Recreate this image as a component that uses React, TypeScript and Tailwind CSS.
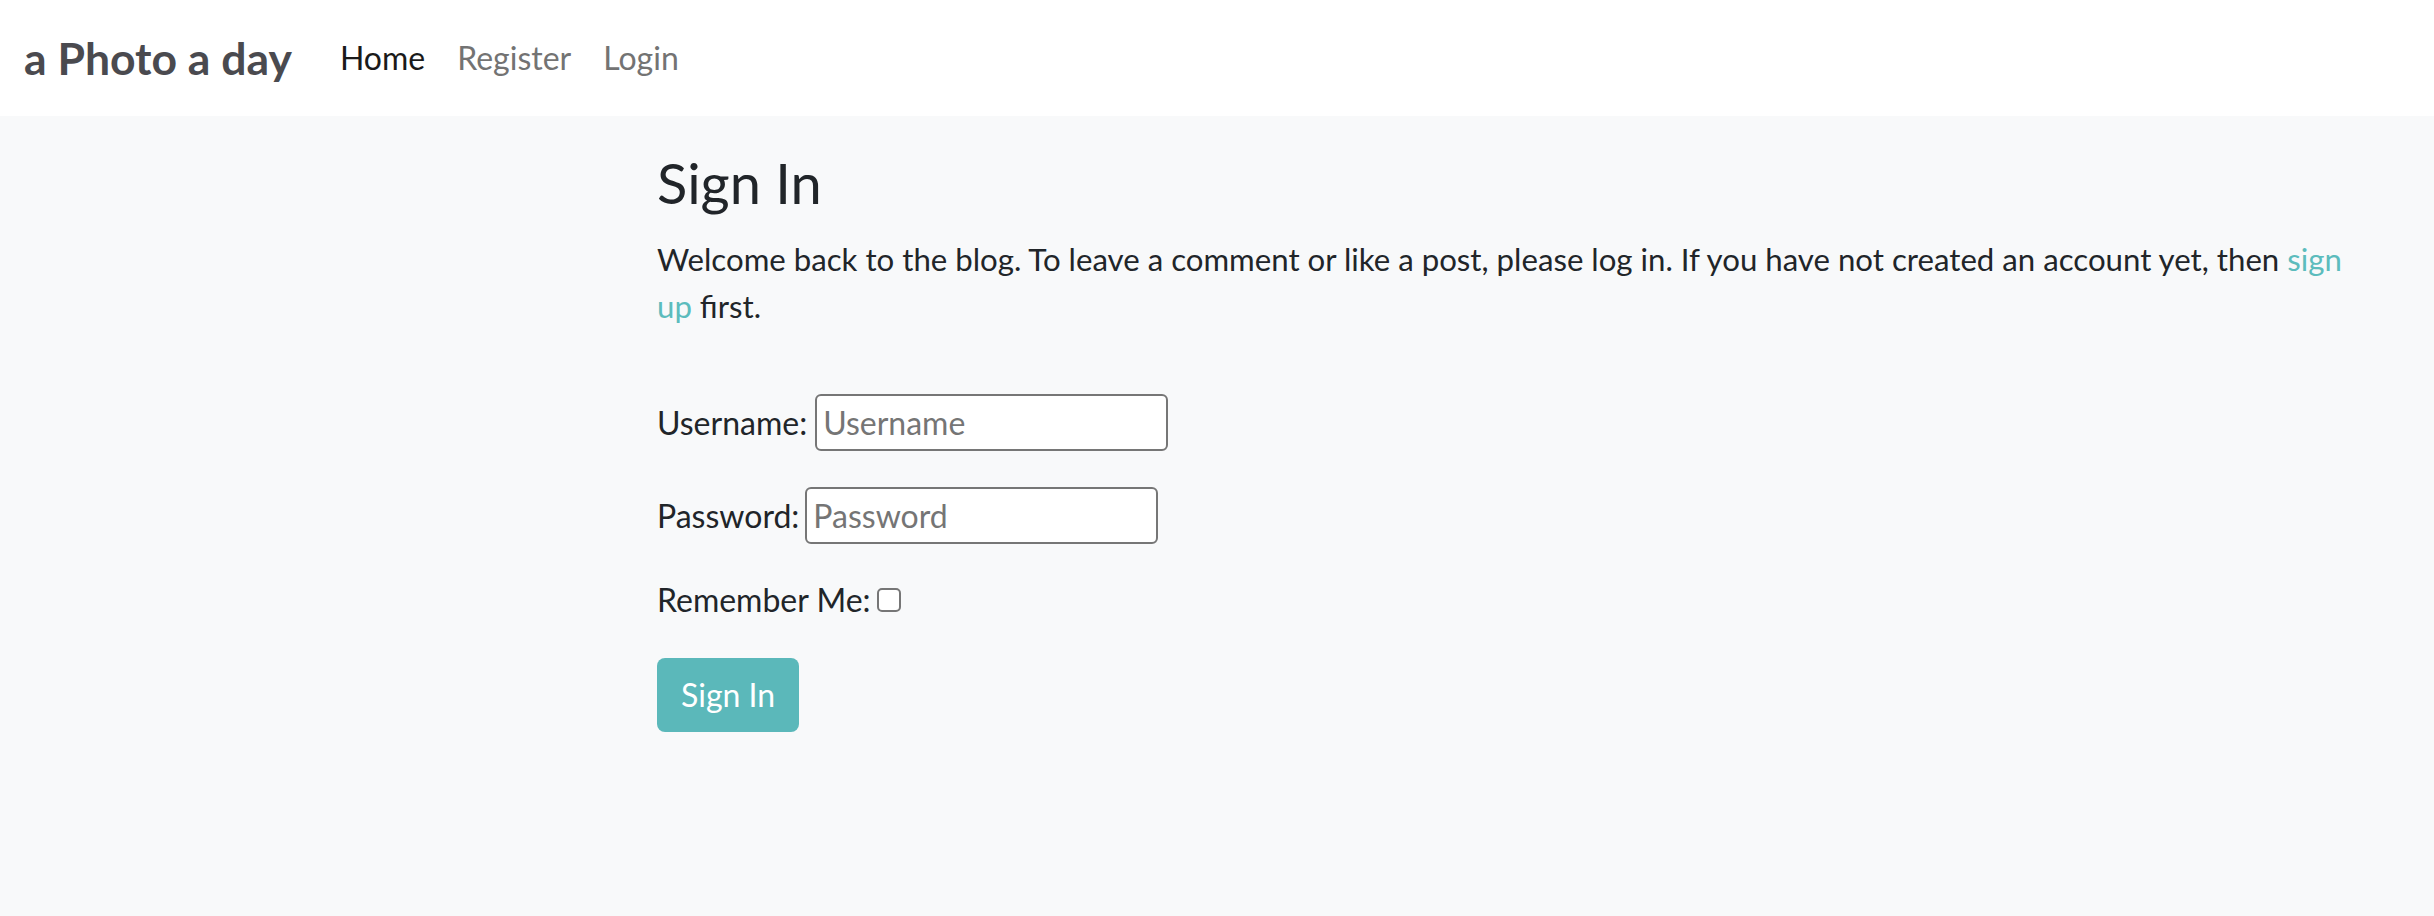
import React from 'react';

const NavBar: React.FC = () => {
  return (
    <nav className="h-[116px] bg-white flex items-center px-[24px]">
      <a href="#" className="text-[44.5px] font-bold text-[#4a4a4f] mr-[32px] leading-[1.5]">
        a Photo a day
      </a>
      <ul className="flex items-center">
        <li>
          <a href="#" className="block px-[16px] text-[32px] leading-[48px] text-[#1a1a1a]">Home</a>
        </li>
        <li>
          <a href="#" className="block px-[16px] text-[32px] leading-[48px] text-[#737373]">Register</a>
        </li>
        <li>
          <a href="#" className="block px-[16px] text-[32px] leading-[48px] text-[#737373]">Login</a>
        </li>
      </ul>
    </nav>
  );
};

const SignInForm: React.FC = () => {
  return (
    <form className="mt-[64px]">
      {/* Username */}
      <div className="flex items-center h-[57px] gap-[8px]">
        <label htmlFor="id_login">Username:</label>
        <input
          id="id_login"
          type="text"
          placeholder="Username"
          className="w-[353px] h-[57px] bg-white border-2 border-[#767676] rounded-[6px] px-[6px] text-[32px] placeholder:text-[#757575] outline-none"
        />
      </div>

      {/* Password */}
      <div className="flex items-center h-[57px] gap-[6px] mt-[36px]">
        <label htmlFor="id_password">Password:</label>
        <input
          id="id_password"
          type="password"
          placeholder="Password"
          className="w-[353px] h-[57px] bg-white border-2 border-[#767676] rounded-[6px] px-[6px] text-[32px] placeholder:text-[#757575] outline-none"
        />
      </div>

      {/* Remember */}
      <div className="flex items-center h-[48px] gap-[6px] mt-[32px]">
        <label htmlFor="id_remember">Remember Me:</label>
        <span className="w-[24px] h-[24px] bg-white border-2 border-[#767676] rounded-[5px]" />
      </div>

      <button
        type="submit"
        className="mt-[34px] h-[74px] px-[24px] bg-[#5bb8ba] text-white rounded-[8px] text-[32px] leading-[48px]"
      >
        Sign In
      </button>
    </form>
  );
};

export default function App() {
  return (
    <div className="min-h-screen bg-[#f8f9fa] text-[#212529] font-['Lato','Liberation_Sans',sans-serif]">
      <NavBar />
      <main className="pl-[657px] pr-[60px] pt-[33px] text-[32px] leading-[48px]">
        <h3 className="text-[56px] leading-[1.2] font-normal mb-[20px]">Sign In</h3>
        <p className="text-[31.2px] leading-[47px]">
          Welcome back to the blog. To leave a comment or like a post, please log in. If you have not created an
          account yet, then <a href="#" className="text-[#5cbcbd]">sign up</a> first.
        </p>
        <SignInForm />
      </main>
    </div>
  );
}
